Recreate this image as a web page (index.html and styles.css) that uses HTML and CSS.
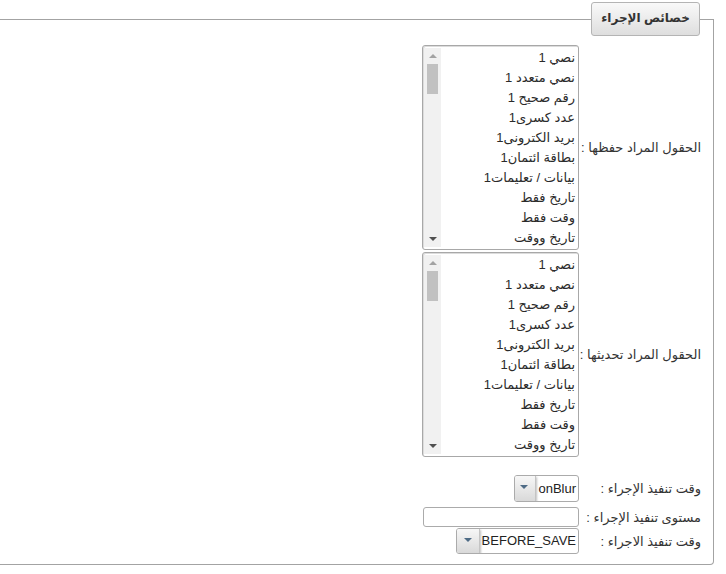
FILE: index.html
```html
<!DOCTYPE html>
<html lang="ar" dir="rtl">
<head>
<meta charset="utf-8">
<title>خصائص الإجراء</title>
<link rel="stylesheet" href="styles.css">
</head>
<body>
<fieldset class="panel">
  <legend class="panel-title">خصائص الإجراء</legend>

  <div class="row">
    <div class="row-label">الحقول المراد حفظها :</div>
    <div class="listbox">
      <ul class="items">
        <li>نصي 1</li>
        <li>نصي متعدد 1</li>
        <li>رقم صحيح 1</li>
        <li>عدد كسرى1</li>
        <li>بريد الكترونى1</li>
        <li>بطاقة ائتمان1</li>
        <li>بيانات / تعليمات1</li>
        <li>تاريخ فقط</li>
        <li>وقت فقط</li>
        <li>تاريخ ووقت</li>
      </ul>
      <div class="scrollbar">
        <span class="arrow up"></span>
        <span class="thumb"></span>
        <span class="track"></span>
        <span class="arrow down"></span>
      </div>
    </div>
  </div>

  <div class="row row-list2">
    <div class="row-label">الحقول المراد تحديثها :</div>
    <div class="listbox">
      <ul class="items">
        <li>نصي 1</li>
        <li>نصي متعدد 1</li>
        <li>رقم صحيح 1</li>
        <li>عدد كسرى1</li>
        <li>بريد الكترونى1</li>
        <li>بطاقة ائتمان1</li>
        <li>بيانات / تعليمات1</li>
        <li>تاريخ فقط</li>
        <li>وقت فقط</li>
        <li>تاريخ ووقت</li>
      </ul>
      <div class="scrollbar">
        <span class="arrow up"></span>
        <span class="thumb"></span>
        <span class="track"></span>
        <span class="arrow down"></span>
      </div>
    </div>
  </div>

  <div class="row row-sel1">
    <div class="row-label">وقت تنفيذ الإجراء :</div>
    <div class="dropdown dropdown-short">
      <span class="dropdown-value">onBlur</span>
      <span class="dropdown-btn"><span class="caret"></span></span>
    </div>
  </div>

  <div class="row row-input">
    <div class="row-label">مستوى تنفيذ الإجراء :</div>
    <input class="textbox" type="text">
  </div>

  <div class="row row-sel2">
    <div class="row-label">وقت تنفيذ الاجراء :</div>
    <div class="dropdown dropdown-long">
      <span class="dropdown-value">BEFORE_SAVE</span>
      <span class="dropdown-btn"><span class="caret"></span></span>
    </div>
  </div>
</fieldset>
</body>
</html>
```

FILE: styles.css
```css
html, body {
  margin: 0;
  padding: 0;
  background: #fff;
}

body {
  padding-top: 2px;
  font-family: "Liberation Sans", "DejaVu Sans", sans-serif;
  font-size: 13px;
  color: #333;
  overflow: hidden;
}

.panel {
  margin: 0 12px 0 -10px;
  padding: 9px 12px 10px 0;
  border: 1px solid #a3a3a3;
  border-left: none;
  border-bottom-right-radius: 4px;
  min-width: 0;
}

.panel-title {
  box-sizing: border-box;
  width: 109px;
  height: 34px;
  margin-left: auto;
  margin-right: 1px;
  padding: 0;
  border: 1px solid #b4b4b4;
  border-radius: 3px;
  background: linear-gradient(#f9f9f9, #dedede);
  font-weight: bold;
  font-size: 12px;
  line-height: 31px;
  text-align: center;
  color: #333;
}

.row {
  display: flex;
  align-items: center;
}

.row-label {
  flex: none;
  width: 122px;
  white-space: nowrap;
  color: #333;
}

.row-list2 { margin-top: 2px; }
.row-sel1 { margin-top: 18px; }
.row-input { margin-top: 5px; }
.row-sel2 { margin-top: 1px; }

.listbox {
  box-sizing: border-box;
  width: 157px;
  height: 205px;
  display: flex;
  border: 1px solid #a8a8a8;
  border-radius: 3px;
  box-shadow: inset 1px 1px 0 #dcdcdc;
  padding: 2px 0 2px 1px;
  overflow: hidden;
  background: #fff;
}

.items {
  flex: 1;
  margin: 0;
  padding: 0 3px 0 0;
  list-style: none;
  overflow: hidden;
}

.items li {
  height: 20px;
  line-height: 20px;
  white-space: nowrap;
  color: #2b2b2b;
}

.scrollbar {
  flex: none;
  width: 17px;
  display: flex;
  flex-direction: column;
  align-items: center;
  background: #f1f1f1;
}

.arrow {
  flex: none;
  width: 17px;
  height: 16px;
  position: relative;
}

.arrow::before {
  content: "";
  position: absolute;
  left: 5px;
  top: 6px;
  border-left: 4px solid transparent;
  border-right: 4px solid transparent;
}

.arrow.up::before {
  border-bottom: 4px solid #a3a3a3;
}

.arrow.down::before {
  border-top: 4px solid #505050;
}

.thumb {
  flex: none;
  width: 11px;
  height: 30px;
  background: #c1c1c1;
}

.track {
  flex: 1;
}

.dropdown {
  box-sizing: border-box;
  display: flex;
  height: 27px;
  border: 1px solid #ababab;
  border-radius: 3px;
  background: #fff;
  overflow: hidden;
}

.dropdown-short { width: 65px; }
.dropdown-long { width: 123px; height: 26px; }

.dropdown-value {
  flex: 1;
  padding: 0 2px;
  font-family: "Liberation Sans", sans-serif;
  font-size: 13px;
  line-height: 25px;
  color: #222;
  text-align: right;
  white-space: nowrap;
}

.dropdown-long .dropdown-value { line-height: 24px; }

.dropdown-btn {
  flex: none;
  width: 22px;
  display: flex;
  align-items: center;
  justify-content: center;
  background: linear-gradient(#f7f7f7, #d9d9d9);
  border-right: 1px solid #c4c4c4;
  box-shadow: 1px 1px 2px rgba(0, 0, 0, 0.25);
}

.caret {
  width: 0;
  height: 0;
  margin-top: -3px;
  border-left: 4px solid transparent;
  border-right: 4px solid transparent;
  border-top: 4px solid #4e6b85;
}

.textbox {
  box-sizing: border-box;
  width: 156px;
  height: 20px;
  margin: 0;
  padding: 0 3px;
  border: 1px solid #ababab;
  border-radius: 3px;
  background: #fff;
  font: inherit;
  outline: none;
}
```
